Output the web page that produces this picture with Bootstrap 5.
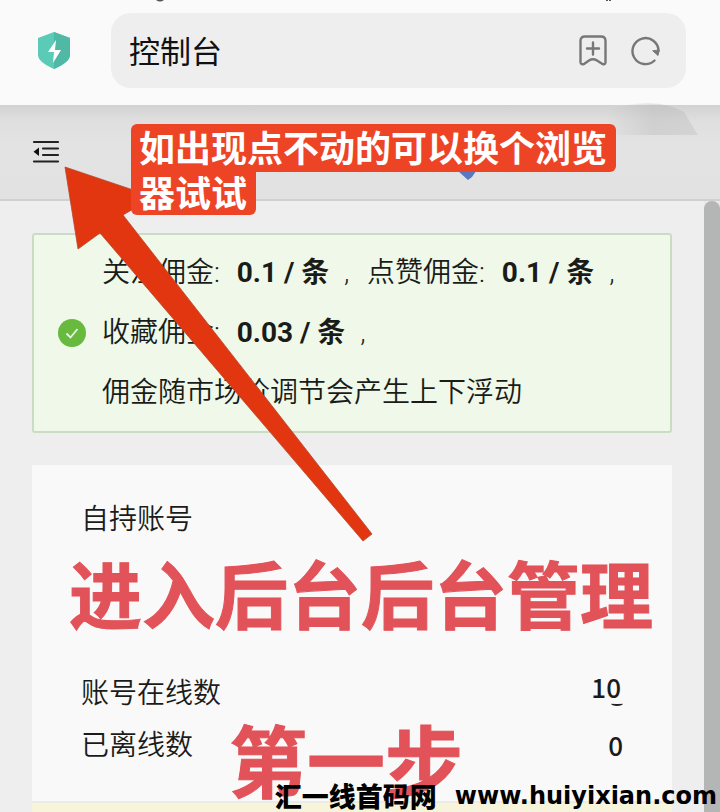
<!DOCTYPE html>
<html lang="zh-CN">
<head>
<meta charset="utf-8">
<meta name="viewport" content="width=device-width, initial-scale=1">
<title>控制台</title>
<link href="https://cdn.jsdelivr.net/npm/bootstrap@5.3.0/dist/css/bootstrap.min.css" rel="stylesheet">
<style>
body{background:#eee;color:#191c19;font-family:Roboto,"Noto Sans CJK SC",sans-serif;font-size:28px;line-height:40px;font-weight:350}
.screen{min-height:100vh}
.browser-bar{background:#fafafa;padding:13px 34px 17px 38px;gap:41px}
.address{background:#eee;border-radius:20px;height:75px;padding:0 25px 0 18px}
.address input{font-size:31px;color:#111;min-width:0;font-family:"Noto Sans CJK SC",sans-serif}
.icon-btn{line-height:0}
.tools{height:96px;background:linear-gradient(#d2d2d2,#dfdfdf 16px,#e3e3e3 40px,#e2e2e2);border-bottom:2px solid #d0d0d0;padding:0 32px}
.scroll-track{width:16px;background:#e9e9e9}
.scroll-thumb{background:#b4b6b5;border-radius:8px 8px 0 0}
.content{padding:32px 32px 0}
.notice{background:#eff8e9;border:2px solid #cbdcc4;border-radius:3px;padding:8px 24px;line-height:60px}
.notice b{font-weight:700;margin:0 8px 0 10px}
.notice p{white-space:nowrap}
.stats{background:#f9f9f9;margin-top:32px;padding:35px 49px 29px}
.stats h1{font-size:28px;font-weight:350;line-height:40px}
.stats dl{margin:128px 0 0}
.stats dt,.stats dd{font-weight:350;line-height:52px}
.stats dd{font-weight:500;font-size:26px;line-height:50px;font-family:"Noto Sans CJK SC",sans-serif}
.stats dd.raised{line-height:38px;padding-right:2px}
.raised::after{content:"";position:absolute;right:0;bottom:14px;width:12px;height:5px;border-bottom:2px solid #222;border-radius:50%}
.strip{background:#f6f5dc;height:11px;border-top:2px solid #ecece2}
.tip-text{left:131px;top:124px;color:#fff;font-size:36px;font-weight:600;z-index:3;font-family:"Noto Sans CJK SC",sans-serif}
.tip-text span{background:#ee4426;padding:0 9px 4px 8px;border-radius:6px;line-height:44px}
.tip-text span:first-child{border-bottom-left-radius:0}
.tip-text span+span{line-height:39px;border-radius:0 0 6px 6px}
.arrow{left:60px;top:160px;z-index:2}
.blob{left:608px;top:100px}
.blue{left:458px;top:168px}
.caption{color:#e25259;font-weight:700;-webkit-text-stroke:1px #e25259;white-space:nowrap;z-index:2;font-family:"Noto Sans CJK SC",sans-serif}
.caption-one{left:69px;top:546px;font-size:73px;line-height:90px}
.caption-two{left:229px;top:713px;font-size:78px;line-height:90px}
.site{right:3px;bottom:0;color:#000;z-index:3;font-size:27px;line-height:32px;font-weight:900;gap:18px;font-family:"Noto Sans CJK SC",sans-serif}
.site a{font-family:"DejaVu Sans",sans-serif;font-size:24px;font-weight:700;color:#000}
</style>
<script src="https://cdn.jsdelivr.net/npm/bootstrap@5.3.0/dist/js/bootstrap.bundle.min.js"></script>
</head>
<body>
<div class="screen position-relative overflow-hidden d-flex flex-column">
  <header class="browser-bar d-flex align-items-center">
    <svg class="flex-shrink-0" width="32" height="37" viewBox="0 0 32 37" aria-hidden="true"><path d="M16 0 32 6v17q0 7-16 14Q0 30 0 23V6z" fill="#5bcbb8"/><path d="M16 0 32 6v17q0 7-16 14z" fill="#4fb9a6"/><path d="M18 8 10 20h6l-1 11 8-13h-6z" fill="#fff"/></svg>
    <div class="address d-flex align-items-center flex-grow-1">
      <input class="form-control border-0 bg-transparent p-0 shadow-none flex-grow-1" type="text" value="控制台" aria-label="地址栏">
      <button class="btn border-0 p-0 icon-btn" type="button" aria-label="添加书签"><svg width="28" height="31" viewBox="0 0 28 31" fill="none" stroke="#777" stroke-width="2.4" stroke-linecap="round" stroke-linejoin="round"><path d="M6 1.5h16q4.500 0 4.500 4.500v21q0 3-3 2l-5.500-3.500q-4-2.500-8 0L5 29q-3.500 1-3.500-2V6q0-4.500 4.500-4.500zM14 7.500v12M8 13.500h12"/></svg></button>
      <button class="btn border-0 p-0 icon-btn ms-4" type="button" aria-label="刷新"><svg width="30" height="30" viewBox="0 0 30 30" fill="none" stroke="#777" stroke-width="2.4" stroke-linecap="round"><path d="M23.500 24.500A13 13 0 1 1 27.500 15"/><path d="m22 15 5 4.500 1-5z" fill="#777" stroke-width="1"/></svg></button>
    </div>
  </header>
  <nav class="tools d-flex align-items-center">
    <button class="btn border-0 p-0 icon-btn" type="button" aria-label="菜单"><svg width="28" height="24" viewBox="0 0 28 24"><path d="M2 2h24M11 8.500h15M11 15h15M2 21.500h24" stroke="#222" stroke-width="2.2" stroke-linecap="round"/><path d="M1.500 11.700 7 7.500v8.500z" fill="#111"/></svg></button>
  </nav>
  <div class="d-flex flex-grow-1">
    <main class="content flex-grow-1">
      <section class="notice d-flex align-items-center">
        <svg class="flex-shrink-0" width="28" height="28" viewBox="0 0 28 28" aria-hidden="true"><circle cx="14" cy="14" r="14" fill="#67ba3e"/><path d="m8.500 14.500 4 4 7-8.500" fill="none" stroke="#e7f6df" stroke-width="1.8"/></svg>
        <div class="ms-3">
          <p class="m-0">关注佣金: <b>0.1 / 条</b> , &nbsp;<span class="ms-1">点赞佣金: <b>0.1 / 条</b> ,</span></p>
          <p class="m-0">收藏佣金: <b>0.03 / 条</b> ,</p>
          <p class="m-0">佣金随市场价调节会产生上下浮动</p>
        </div>
      </section>
      <section class="stats">
        <h1 class="m-0">自持账号</h1>
        <dl>
          <div class="d-flex justify-content-between"><dt>账号在线数</dt><dd class="m-0 raised position-relative">10</dd></div>
          <div class="d-flex justify-content-between"><dt>已离线数</dt><dd class="m-0">0</dd></div>
        </dl>
      </section>
      <div class="strip"></div>
    </main>
    <div class="scroll-track d-flex" aria-hidden="true"><div class="scroll-thumb flex-grow-1"></div></div>
  </div>

  <svg class="position-absolute top-0 start-0 w-100" height="3" aria-hidden="true"><path d="M156 0q4 3 8 0zM606 0h2v1h-2zM609 0h2v1h-2z" fill="#555"/></svg>
  <svg class="blob position-absolute" width="92" height="35" viewBox="0 0 92 35" aria-hidden="true"><defs><linearGradient id="haze"><stop offset="0" stop-color="#aaa" stop-opacity="0"/><stop offset=".5" stop-color="#aaa" stop-opacity=".3"/><stop offset="1" stop-color="#aaa" stop-opacity=".25"/></linearGradient></defs><path d="M0 35V9Q50-4 76 12l14 23z" fill="url(#haze)"/></svg>
  <svg class="blue position-absolute" width="20" height="13" viewBox="0 0 20 13" aria-hidden="true"><path d="M0 3h18l-4 6-4 3z" fill="#5878c2"/></svg>
  <svg class="arrow position-absolute" width="320" height="390" viewBox="0 0 320 390" aria-hidden="true"><path d="M5 7 94 37 63 55 312 374 303 381 40 73 18 89z" fill="#e1360f" stroke="#b5492e" stroke-width=".8"/></svg>
  <div class="tip-text position-absolute d-flex flex-column align-items-start"><span>如出现点不动的可以换个浏览</span><span>器试试</span></div>
  <div class="caption caption-one position-absolute">进入后台后台管理</div>
  <div class="caption caption-two position-absolute">第一步</div>
  <footer class="site position-absolute d-flex align-items-center text-nowrap"><span>汇一线首码网</span><a class="text-decoration-none" href="#">www.huiyixian.com</a></footer>
</div>
</body>
</html>
